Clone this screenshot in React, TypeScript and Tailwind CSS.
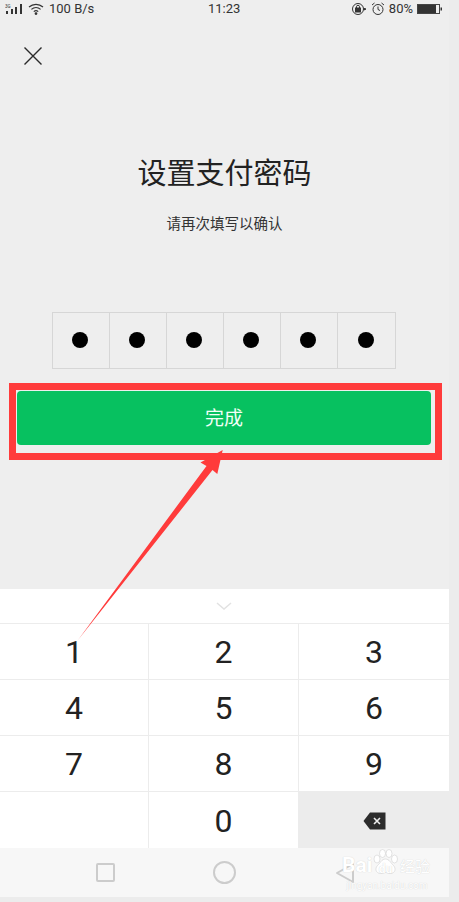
import React from "react";

function Key({ label, right, tall, children, bg }: { label?: string; right?: boolean; tall?: boolean; children?: React.ReactNode; bg?: string }) {
  return (
    <div className={`flex items-center justify-center ${tall ? "h-[57px]" : "h-[56px]"} pt-[1px] border-t border-[#ececec] ${right ? "border-r" : ""} ${bg ?? ""} text-[32px] text-[#222]`}>
      {label}
      {children}
    </div>
  );
}

export default function App() {
  return (
    <div className="relative w-[459px] h-[902px] overflow-hidden bg-[#ececec] font-['Roboto','Noto_Sans_CJK_SC',sans-serif]">
      <div className="flex flex-col w-[449px] h-[897px] bg-[#eeeeee]">
        {/* status bar */}
        <div className="relative flex items-center justify-between h-[18px] pl-[5px] pr-[6px] text-[12px] text-[#333]">
          <div className="flex items-center gap-[5px]">
            <svg width="18" height="12" viewBox="0 0 18 12">
              <text x="0" y="4.5" fontSize="4.5" fill="#333" fontFamily="Roboto">3G</text>
              <rect x="1" y="8" width="2" height="3" fill="#333" />
              <rect x="6" y="6" width="2" height="5" fill="#333" />
              <rect x="10" y="4" width="2" height="7" fill="#333" />
              <rect x="15" y="1" width="2" height="10" fill="#333" />
            </svg>
            <svg width="16" height="12" viewBox="0 0 16 12" fill="none" stroke="#333" strokeWidth="1.2">
              <path d="M1 4c4-3.6 10-3.6 14 0" />
              <path d="M3.4 6.4c2.7-2.4 6.5-2.4 9.2 0" />
              <path d="M5.8 8.6c1.3-1.1 3.1-1.1 4.4 0" />
              <circle cx="8" cy="10.6" r="0.8" fill="#333" />
            </svg>
            <span className="text-[13px]">100 B/s</span>
          </div>
          <span className="absolute left-[208px] text-[13px]">11:23</span>
          <div className="flex items-center gap-[4px]">
            <svg width="16" height="14" viewBox="0 0 16 14" fill="none" stroke="#333" strokeWidth="1">
              <circle cx="7" cy="7" r="5.5" />
              <rect x="4.5" y="6" width="5" height="4" fill="#333" />
              <path d="M5.5 6V4.8a1.500 1.500 0 0 1 3 0V6" />
              <path d="M13 6.5l2 .5-2 1z" fill="#333" />
            </svg>
            <svg width="14" height="14" viewBox="0 0 14 14" fill="none" stroke="#333" strokeWidth="1">
              <circle cx="7" cy="7.5" r="5" />
              <path d="M7 4.5v3l2 1" />
              <path d="M1 3l2.5-2M13 3l-2.5-2" />
            </svg>
            <span className="text-[13px]">80%</span>
            <svg width="26" height="12" viewBox="0 0 26 12">
              <rect x="0.5" y="1.5" width="22" height="9" fill="none" stroke="#444" strokeWidth="1" />
              <rect x="1" y="2" width="18" height="8" fill="#333" />
              <rect x="23.5" y="4.5" width="1.5" height="3" fill="#333" />
            </svg>
          </div>
        </div>

        {/* close */}
        <div className="pl-[24px] pt-[29px]">
          <svg width="18" height="18" viewBox="0 0 18 18" stroke="#2a2a2a" strokeWidth="1.4" fill="none">
            <path d="M0.5 0.5L17.5 17.5M17.5 0.5L0.5 17.5" />
          </svg>
        </div>

        {/* title */}
        <h1 className="mt-[91px] text-center text-[29px] leading-[36px] text-[#222] font-normal">设置支付密码</h1>
        <p className="mt-[23px] text-center text-[14.5px] leading-[20px] text-[#333]">请再次填写以确认</p>

        {/* password boxes */}
        <div className="mt-[77px] ml-[52px] w-[344px] h-[57px] grid grid-cols-6 border border-[#d6d6d6]">
          {[0, 1, 2, 3, 4, 5].map((i) => (
            <div key={i} className={`flex items-center justify-center pr-[2px] pb-[2px] ${i < 5 ? "border-r border-[#d6d6d6]" : ""}`}>
              <span className="block w-[16px] h-[16px] rounded-full bg-black" />
            </div>
          ))}
        </div>

        {/* button */}
        <div className="mt-[22px] ml-[17px] w-[414px] h-[54px] pt-[2px] rounded-[4px] bg-[#07c160] flex items-center justify-center text-[19px] text-[#f2fff7]">
          完成
        </div>

        {/* keyboard */}
        <div className="mt-auto bg-white">
          <div className="flex items-center justify-center h-[34px] pr-[1px]">
            <svg width="16" height="8" viewBox="0 0 16 8" fill="none" stroke="#e2e2e2" strokeWidth="1.5">
              <path d="M1 1l7 6 7-6" />
            </svg>
          </div>
          <div className="grid grid-cols-[149px_150px_150px]">
            <Key label="1" right />
            <Key label="2" right />
            <Key label="3" />
            <Key label="4" right />
            <Key label="5" right />
            <Key label="6" />
            <Key label="7" right />
            <Key label="8" right />
            <Key label="9" />
            <Key right tall />
            <Key label="0" right tall />
            <Key bg="bg-[#ececec]" tall>
              <svg width="23" height="18" viewBox="0 0 23 18">
                <path d="M7 0.5h15.500v17H7L0.500 9z" fill="#2c2c2c" />
                <path d="M11 6l6 6M17 6l-6 6" stroke="#eee" strokeWidth="1.6" />
              </svg>
            </Key>
          </div>
        </div>

        {/* navigation bar */}
        <div className="flex items-center h-[49px] bg-[#f7f7f7]">
          <div className="w-[96px]" />
          <div className="w-[19px] h-[19px] rounded-[2px] border-2 border-[#cccccc]" />
          <div className="w-[98px]" />
          <div className="w-[23px] h-[23px] rounded-full border-2 border-[#cccccc]" />
          <div className="w-[99px]" />
          <svg width="20" height="24" viewBox="0 0 20 24" fill="none" stroke="#cccccc" strokeWidth="2" strokeLinejoin="round">
            <path d="M2 12L18 3v18z" />
          </svg>
        </div>
      </div>

      {/* red highlight annotation */}
      <div className="absolute left-[9px] top-[383px] w-[433px] h-[77px] border-[7px] border-[#ff3b3b]" />
      <svg className="absolute left-0 top-0" width="459" height="902" viewBox="0 0 459 902">
        <path d="M78 640L206.5 466L200.5 462.5L222.7 450L217.3 474L212.5 470Z" fill="#ff3b3b" />
      </svg>

      {/* watermark */}
      <div className="absolute left-[342px] top-[848px] w-[90px] flex flex-col items-center text-white [text-shadow:0_0_1px_#c8c8c8]">
        <div className="relative flex items-end h-[29px] w-full">
          <span className="text-[21px] leading-[24px] font-bold w-[30px]">Bai</span>
          <span className="relative w-[27px] h-[28px] flex items-end justify-center">
            <svg className="absolute left-0 top-0" width="27" height="28" viewBox="0 0 27 28" fill="#ffffff" stroke="#d0d0d0" strokeWidth="0.6">
              <ellipse cx="5" cy="10" rx="3" ry="4" />
              <ellipse cx="10.5" cy="4.5" rx="3" ry="4" />
              <ellipse cx="17" cy="4.5" rx="3" ry="4" />
              <ellipse cx="22.5" cy="10" rx="3" ry="4" />
              <path d="M13.5 10c4 0 5 4 8 6.500 3 3 1.500 8-3 8-2.500 0-3.500-1-5-1s-2.500 1-5 1c-4.500 0-6-5-3-8 3-2.500 4-6.500 8-6.500z" />
            </svg>
            <span className="relative text-[12px] leading-[16px] font-bold text-white">du</span>
          </span>
          <span className="text-[15px] leading-[20px] ml-[1px] whitespace-nowrap">经验</span>
        </div>
        <div className="mt-[3px] text-[10px] leading-[12px] whitespace-nowrap">jingyan.baidu.com</div>
      </div>
    </div>
  );
}
